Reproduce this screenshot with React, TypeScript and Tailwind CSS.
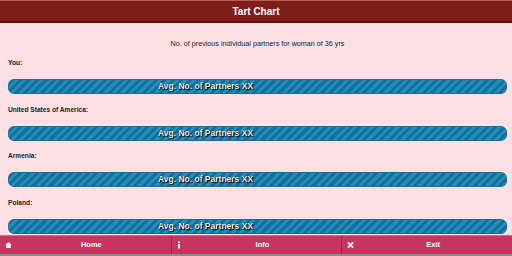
import React from "react";

const rows = [
  { label: "You:", gap: "h-[3px]" },
  { label: "United States of America:", gap: "h-[2px]" },
  { label: "Armenia:", gap: "h-[3px]" },
  { label: "Poland:", gap: "h-0" },
];

function Bar() {
  return (
    <div
      className="relative h-[15px] rounded-[6px] border border-[#1a6f96] overflow-hidden flex items-center"
      style={{
        backgroundImage:
          "repeating-linear-gradient(-45deg, #1f8fc0 0px, #1f8fc0 3px, #186e97 3px, #186e97 6px)",
      }}
    >
      <div className="w-[393px] text-center text-[8.5px] font-bold text-[#e8f4fa] [text-shadow:0_0_1px_#000,1px_1px_1px_#000] leading-none">
        Avg. No. of Partners XX
      </div>
    </div>
  );
}

export default function App() {
  return (
    <div
      className="w-[512px] h-[256px] bg-[#fde0e4] flex flex-col overflow-hidden"
      style={{ fontFamily: '"Liberation Sans", Arial, sans-serif' }}
    >
      <div className="h-[23px] shrink-0 bg-[#7e1e18] border-t border-t-[#b4605a] border-b-2 border-b-[#6a0f0c] flex items-center justify-center text-white text-[10px] font-bold">
        Tart Chart
      </div>
      <div className="flex-1 min-h-0 overflow-hidden flex flex-col pl-[8px] pr-[5px] pt-[17px]">
        <div className="text-center text-[7.2px] text-[#222] leading-none h-[10px] shrink-0">
          No. of previous individual partners for woman of 36 yrs
        </div>
        {rows.map((r) => (
          <div key={r.label} className="flex flex-col shrink-0">
            <div className="text-[6.6px] font-bold text-[#222] leading-none pt-[10px] h-[29px] flex items-start">
              {r.label}
            </div>
            <Bar />
            <div className={r.gap} />
          </div>
        ))}
      </div>
      <div className="h-[21px] shrink-0 bg-[#c63560] border-t border-t-[#e06a8a] border-b-2 border-b-[#8f8a8c] grid grid-cols-3 text-white text-[7.5px] font-bold">
        {[
          { icon: "home", label: "Home" },
          { icon: "info", label: "Info" },
          { icon: "x", label: "Exit" },
        ].map((b, i) => (
          <div
            key={b.label}
            className={`relative flex items-center justify-center pl-[12px] ${i > 0 ? "border-l border-l-[#9e2548]" : ""}`}
          >
            <span className="absolute left-[5px] top-1/2 -translate-y-1/2 flex items-center">
              {b.icon === "home" && (
                <svg width="7" height="7" viewBox="0 0 8 8">
                  <path d="M4 0.5 L7.8 4 L6.6 4 L6.6 7.5 L1.4 7.5 L1.4 4 L0.2 4 Z" fill="#fff" />
                </svg>
              )}
              {b.icon === "info" && (
                <svg width="4" height="8" viewBox="0 0 4 8">
                  <rect x="1" y="0.5" width="2" height="1.6" fill="#fff" />
                  <rect x="1" y="3" width="2" height="4.5" fill="#fff" />
                </svg>
              )}
              {b.icon === "x" && (
                <svg width="7" height="7" viewBox="0 0 8 8">
                  <path d="M1 1 L7 7 M7 1 L1 7" stroke="#fff" strokeWidth="2.2" />
                </svg>
              )}
            </span>
            <span>{b.label}</span>
          </div>
        ))}
      </div>
    </div>
  );
}
